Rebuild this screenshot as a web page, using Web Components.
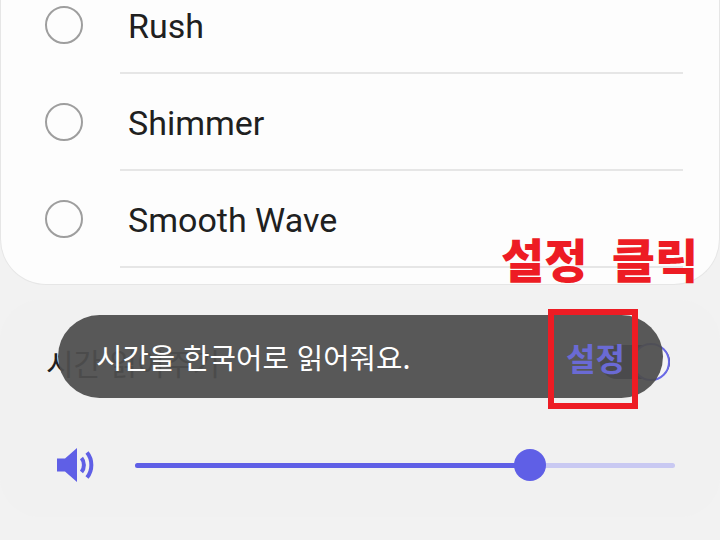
<!DOCTYPE html>
<html lang="ko">
<head>
<meta charset="utf-8">
<title>Sound</title>
<style>
  html, body { margin: 0; padding: 0; }
  body {
    width: 720px;
    height: 540px;
    overflow: hidden;
    position: relative;
    background: #f2f2f2;
    font-family: Roboto, "Noto Sans CJK KR", sans-serif;
  }
</style>
</head>
<body>
<sound-list>
  <sound-row>Rush</sound-row>
  <sound-row>Shimmer</sound-row>
  <sound-row>Smooth Wave</sound-row>
</sound-list>
<settings-panel>
  <time-row>시간 읽어주기</time-row>
  <volume-row value="73.2"></volume-row>
</settings-panel>
<snack-bar action="설정">시간을 한국어로 읽어줘요.</snack-bar>
<click-note>설정 클릭</click-note>

<script>
class SoundList extends HTMLElement {
  constructor() {
    super();
    this.attachShadow({mode: 'open'}).innerHTML = `
      <style>
        :host {
          display: block;
          margin-top: -23px;
          height: 308px;
          box-sizing: border-box;
          background: #fdfdfd;
          border: 1px solid #e6e6e6;
          border-top: 0;
          border-radius: 0 0 46px 46px;
        }
      </style>
      <slot></slot>`;
  }
}

class SoundRow extends HTMLElement {
  constructor() {
    super();
    this.attachShadow({mode: 'open'}).innerHTML = `
      <style>
        :host {
          display: flex;
          height: 97px;
          box-sizing: border-box;
          padding-left: 44px;
          align-items: center;
        }
        .radio {
          width: 38px;
          height: 38px;
          box-sizing: border-box;
          border: 2px solid #9e9e9e;
          border-radius: 50%;
          flex: none;
          margin-top: -2px;
        }
        .label {
          flex: none;
          box-sizing: border-box;
          width: 563px;
          height: 97px;
          margin: 0 37px 0 37px;
          padding: 2px 0 0 8px;
          display: flex;
          align-items: center;
          border-bottom: 2px solid #e6e6e6;
          font: 400 34px Roboto, sans-serif;
          color: #202020;
        }
      </style>
      <div class="radio"></div>
      <div class="label"><slot></slot></div>`;
  }
}

class SettingsPanel extends HTMLElement {
  constructor() {
    super();
    this.attachShadow({mode: 'open'}).innerHTML = `
      <style>
        :host {
          display: block;
          box-sizing: border-box;
          height: 217px;
          margin-top: 15px;
          padding: 42px 50px 0 46px;
          background: #f1f1f1;
          border-radius: 40px;
        }
      </style>
      <slot></slot>`;
  }
}

class TimeRow extends HTMLElement {
  constructor() {
    super();
    this.attachShadow({mode: 'open'}).innerHTML = `
      <style>
        :host {
          display: flex;
          align-items: center;
          justify-content: space-between;
          height: 40px;
          font: 400 30px "Noto Sans CJK KR", sans-serif;
          color: #202020;
        }
        .switch {
          position: relative;
          width: 70px;
          height: 34px;
          border-radius: 17px;
          background: #16163c;
        }
        .knob {
          position: absolute;
          right: 0;
          top: -2px;
          width: 38px;
          height: 38px;
          box-sizing: border-box;
          border: 2px solid #6a6ae6;
          border-radius: 50%;
          background: #f4f4f4;
        }
      </style>
      <span><slot></slot></span>
      <div class="switch"><div class="knob"></div></div>`;
  }
}

class VolumeRow extends HTMLElement {
  constructor() {
    super();
    const value = this.getAttribute('value');
    this.attachShadow({mode: 'open'}).innerHTML = `
      <style>
        :host {
          display: flex;
          align-items: center;
          height: 36px;
          margin-top: 65px;
          margin-left: 11px;
          margin-right: -5px;
          gap: 41px;
        }
        svg { flex: none; display: block; }
        .track {
          flex: 1;
          position: relative;
          height: 5px;
          border-radius: 3px;
          background: #c9c9f2;
        }
        .fill {
          height: 100%;
          border-radius: 3px;
          background: #5f5fe6;
          width: ${value}%;
        }
        .thumb {
          position: absolute;
          left: ${value}%;
          top: 50%;
          width: 32px;
          height: 32px;
          margin: -16px 0 0 -16px;
          border-radius: 50%;
          background: #5f5fe6;
        }
      </style>
      <svg width="37" height="36" viewBox="0 0 37 36">
        <path d="M0 11.5h8L20 1v34L8 24.5H0z" fill="#5f5fe6"/>
        <path d="M24.5 11c3.200 3.700 3.200 10.300 0 14" fill="none" stroke="#5f5fe6" stroke-width="4"/>
        <path d="M30 5.500c5.800 7 5.800 18 0 25" fill="none" stroke="#5f5fe6" stroke-width="4"/>
      </svg>
      <div class="track"><div class="fill"></div><div class="thumb"></div></div>`;
  }
}

class SnackBar extends HTMLElement {
  constructor() {
    super();
    this.attachShadow({mode: 'open'}).innerHTML = `
      <style>
        :host {
          position: absolute;
          left: 58px;
          top: 315px;
          width: 605px;
          height: 83px;
          box-sizing: border-box;
          padding: 0 38px 0 38px;
          display: flex;
          align-items: center;
          justify-content: space-between;
          border-radius: 42px;
          background: rgba(78, 78, 78, 0.94);
          font: 400 28.7px "Noto Sans CJK KR", sans-serif;
          color: #fff;
        }
        .action { color: #6a6ad4; font-weight: 700; font-size: 32px; }
      </style>
      <span><slot></slot></span>
      <span class="action">${this.getAttribute('action')}</span>`;
  }
}

class ClickNote extends HTMLElement {
  constructor() {
    super();
    this.attachShadow({mode: 'open'}).innerHTML = `
      <style>
        :host {
          position: absolute;
          left: 501px;
          top: 224px;
          font: 900 47px/68px "Noto Sans CJK KR", sans-serif;
          word-spacing: 11px;
          color: #ed1c24;
          white-space: nowrap;
        }
        .box {
          position: absolute;
          left: 47px;
          top: 85px;
          width: 90px;
          height: 100px;
          box-sizing: border-box;
          border: 6px solid #ed1c24;
        }
      </style>
      <slot></slot>
      <div class="box"></div>`;
  }
}

customElements.define('sound-list', SoundList);
customElements.define('sound-row', SoundRow);
customElements.define('settings-panel', SettingsPanel);
customElements.define('time-row', TimeRow);
customElements.define('volume-row', VolumeRow);
customElements.define('snack-bar', SnackBar);
customElements.define('click-note', ClickNote);
</script>
</body>
</html>
